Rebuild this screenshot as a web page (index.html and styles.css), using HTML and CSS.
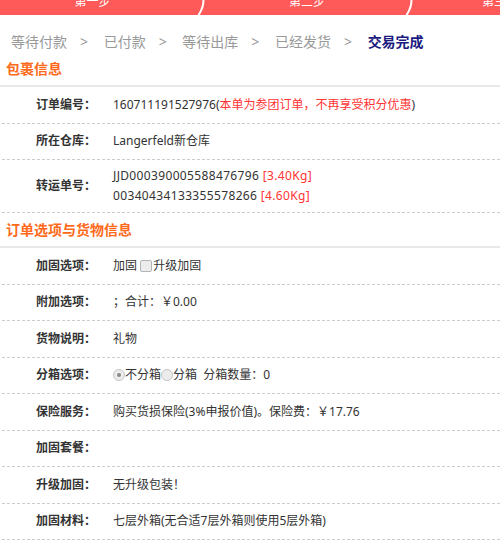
FILE: index.html
```html
<!DOCTYPE html>
<html lang="zh-CN">

<head>
    <meta charset="UTF-8">
    <meta name="viewport" content="width=device-width, initial-scale=1.0">
    <title>订单详情</title>
    <link rel="stylesheet" href="styles.css">
</head>

<body>
    <div class="steps">
        <div class="step step-first"><span>第一步</span></div>
        <svg class="step-sep" width="8" height="15" viewBox="0 0 8 15">
            <path d="M6.5 0 Q6.5 8 1.5 15" fill="none" stroke="#fff" stroke-width="2" />
        </svg>
        <div class="step step-mid"><span>第二步</span></div>
        <svg class="step-sep" width="8" height="15" viewBox="0 0 8 15">
            <path d="M6.5 0 Q6.5 8 1.5 15" fill="none" stroke="#fff" stroke-width="2" />
        </svg>
        <div class="step step-last"><span>第三步</span></div>
    </div>

    <div class="crumbs">
        <span>等待付款</span><span class="arrow">&gt;</span>
        <span>已付款</span><span class="arrow">&gt;</span>
        <span>等待出库</span><span class="arrow">&gt;</span>
        <span>已经发货</span><span class="arrow">&gt;</span>
        <span class="current">交易完成</span>
    </div>

    <h2 class="block-title">包裹信息</h2>
    <div class="info-row">
        <div class="info-label">订单编号：</div>
        <div class="info-value">160711191527976(<span class="red">本单为参团订单，不再享受积分优惠</span>)</div>
    </div>
    <div class="info-row">
        <div class="info-label">所在仓库：</div>
        <div class="info-value">Langerfeld新仓库</div>
    </div>
    <div class="info-row">
        <div class="info-label">转运单号：</div>
        <div class="info-value latin">
            <div>JJD000390005588476796 <span class="red">[3.40Kg]</span></div>
            <div>00340434133355578266 <span class="red">[4.60Kg]</span></div>
        </div>
    </div>

    <h2 class="block-title">订单选项与货物信息</h2>
    <div class="info-row">
        <div class="info-label">加固选项：</div>
        <div class="info-value">加固 <span class="check"></span>升级加固</div>
    </div>
    <div class="info-row">
        <div class="info-label">附加选项：</div>
        <div class="info-value">；合计：￥0.00</div>
    </div>
    <div class="info-row">
        <div class="info-label">货物说明：</div>
        <div class="info-value">礼物</div>
    </div>
    <div class="info-row">
        <div class="info-label">分箱选项：</div>
        <div class="info-value"><span class="radio checked"></span>不分箱<span class="radio"></span>分箱&nbsp;&nbsp;分箱数量：0</div>
    </div>
    <div class="info-row">
        <div class="info-label">保险服务：</div>
        <div class="info-value">购买货损保险(3%申报价值)。保险费：￥17.76</div>
    </div>
    <div class="info-row">
        <div class="info-label">加固套餐：</div>
        <div class="info-value"></div>
    </div>
    <div class="info-row">
        <div class="info-label">升级加固：</div>
        <div class="info-value">无升级包装！</div>
    </div>
    <div class="info-row">
        <div class="info-label">加固材料：</div>
        <div class="info-value">七层外箱(无合适7层外箱则使用5层外箱)</div>
    </div>
</body>

</html>
```

FILE: styles.css
```css
body {
    margin: 0;
    background: #fff;
    color: #333;
    font-family: "Noto Sans", "Noto Sans CJK SC", sans-serif;
    font-size: 12px;
    overflow: hidden;
}

/* шаги заказа */
.steps {
    display: flex;
    height: 15px;
    background: #ff5a5a;
    overflow: hidden;
}

.step {
    flex: none;
    color: #fff;
    font-size: 12px;
    line-height: 15px;
    white-space: nowrap;
}

.step span {
    display: block;
    margin-top: -6px;
}

.step-first {
    width: 197px;
    text-align: center;
    padding-right: 12px;
    box-sizing: border-box;
}

.step-mid {
    width: 200px;
    text-align: center;
    padding-left: 4px;
    box-sizing: border-box;
}

.step-last {
    width: 200px;
    padding-left: 69px;
    box-sizing: border-box;
}

.step-sep {
    flex: none;
    display: block;
}

/* хлебные крошки статуса */
.crumbs {
    margin-top: 17px;
    height: 20px;
    line-height: 20px;
    padding-left: 11px;
    font-size: 14px;
    color: #999;
    white-space: nowrap;
}

.crumbs .arrow {
    padding: 0 12px 0 13px;
}

.crumbs .current {
    color: #1b1b80;
    font-weight: bold;
}

.block-title {
    margin: 0;
    height: 33px;
    line-height: 33px;
    padding-left: 6px;
    font-size: 14px;
    font-weight: bold;
    color: #ff6a1a;
    border-bottom: 2px solid #e8e8e8;
}

.info-row {
    display: grid;
    grid-template-columns: 94px 1fr;
    column-gap: 17px;
    align-items: center;
    min-height: 36.5px;
    box-sizing: border-box;
    padding: 6px 0;
    margin-left: 2px;
    border-bottom: 1px dashed #ccc;
    line-height: 20px;
}

.info-label {
    text-align: right;
    font-weight: bold;
    color: #333;
}

.info-value {
    white-space: nowrap;
}

.latin {
    letter-spacing: 0.35px;
}

.red {
    color: #ff3333;
}

.check {
    display: inline-block;
    width: 10px;
    height: 10px;
    border: 1px solid #b5b5b5;
    border-radius: 2px;
    background: #ececec;
    vertical-align: -2px;
    margin-right: 1px;
}

.radio {
    display: inline-block;
    width: 10px;
    height: 10px;
    border: 1px solid #c4c4c4;
    border-radius: 50%;
    background: #ececec;
    vertical-align: -2px;
    position: relative;
}

.radio.checked::after {
    content: "";
    position: absolute;
    left: 3px;
    top: 3px;
    width: 4px;
    height: 4px;
    border-radius: 50%;
    background: #8a8a8a;
}
```
